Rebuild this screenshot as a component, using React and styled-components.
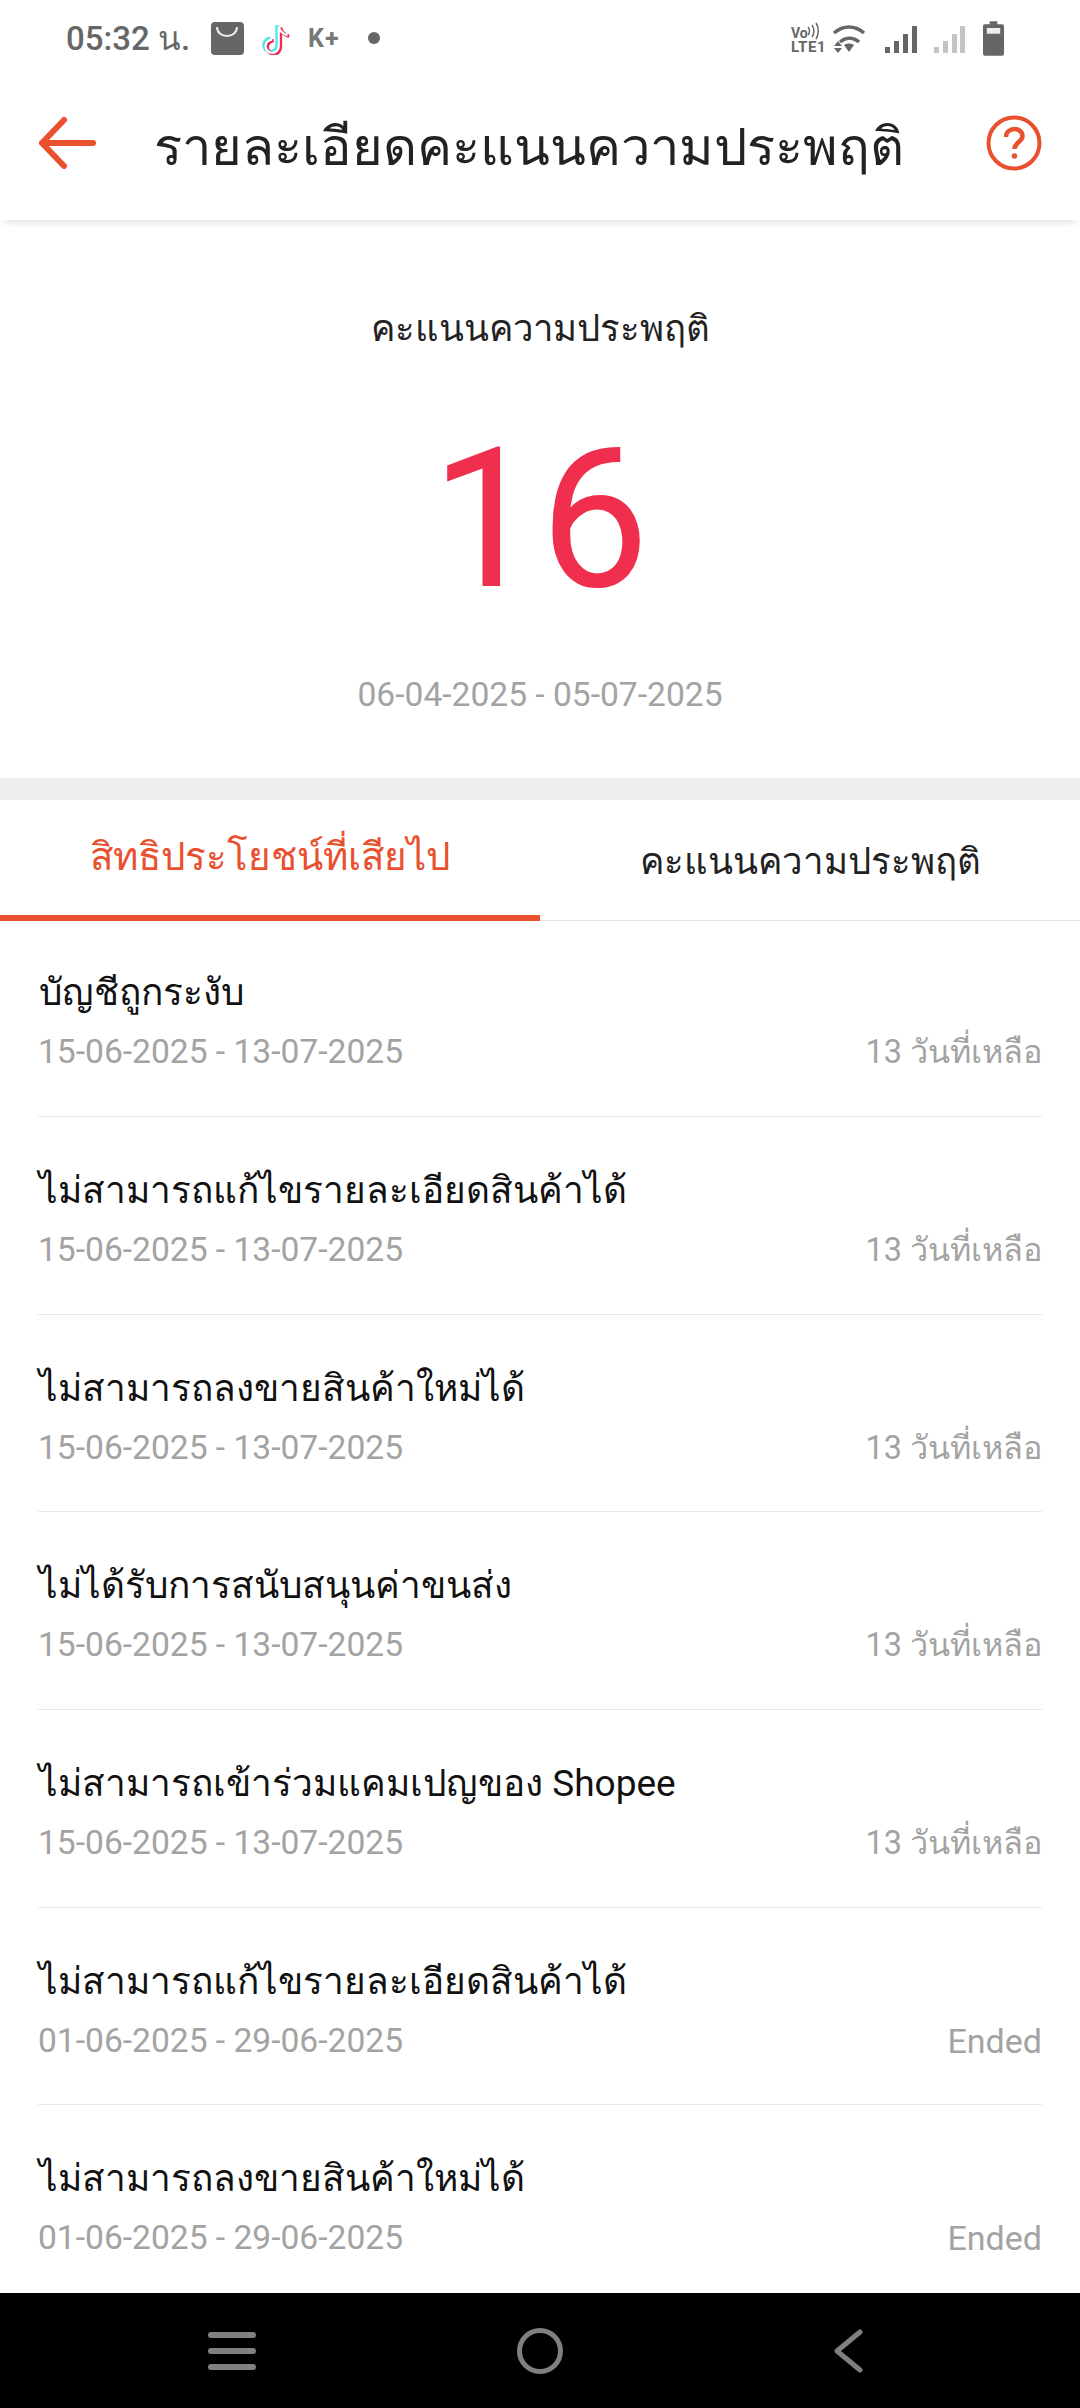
import React from 'react';
import styled, { createGlobalStyle } from 'styled-components';

const GlobalStyle = createGlobalStyle`
  html, body {
    margin: 0;
    padding: 0;
    background: #fff;
    font-family: Roboto, "Noto Sans", "Noto Sans CJK SC", sans-serif;
  }
  * { box-sizing: border-box; }
`;

const ORANGE = '#e8502e';

const Page = styled.div`
  width: 1080px;
  height: 2408px;
  display: flex;
  flex-direction: column;
  overflow: hidden;
  background: #fff;
`;

const StatusBar = styled.div`
  height: 72px;
  flex: none;
  display: flex;
  align-items: center;
  justify-content: space-between;
  padding: 4px 76px 0 66px;
  color: #666;
`;

const StatusGroup = styled.div`
  display: flex;
  align-items: center;
`;

const Clock = styled.span`
  font-size: 33px;
  margin-right: 21px;
  font-weight: 500;
  white-space: nowrap;
`;

const TiktokSvg = styled.svg`
  margin-left: 17px;
`;

const KPlus = styled.span`
  font-size: 25px;
  font-weight: 700;
  letter-spacing: 1px;
  color: #777;
  margin: 0 28px 0 17px;
`;

const Dot = styled.span`
  width: 12px;
  height: 12px;
  border-radius: 50%;
  background: #666;
`;

const BatterySvg = styled.svg`
  margin-left: 18px;
`;

const AppBar = styled.header`
  height: 148px;
  flex: none;
  display: flex;
  align-items: center;
  padding: 0 38px 0 37px;
  position: relative;
  background: #fff;
  box-shadow: 0 7px 7px -5px rgba(0, 0, 0, 0.14);
`;

const BarIcon = styled.svg`
  flex: none;
  margin-bottom: 6px;
`;

const AppTitle = styled.h1`
  flex: 1;
  margin: 0 0 0 57px;
  font-size: 52.5px;
  font-weight: 400;
  color: #222;
  white-space: nowrap;
`;

const Summary = styled.section`
  height: 558px;
  flex: none;
  display: flex;
  flex-direction: column;
  align-items: center;
  padding-top: 84px;
`;

const SummaryLabel = styled.div`
  font-size: 36.5px;
  line-height: 50px;
  color: #222;
`;

const Score = styled.div`
  font-size: 194px;
  line-height: 220px;
  margin-top: 56px;
  color: #ef2f4d;
`;

const SummaryDates = styled.div`
  margin-top: 45px;
  font-size: 33.6px;
  line-height: 40px;
  color: #a3a3a3;
`;

const Band = styled.div`
  height: 22px;
  flex: none;
  background: #efefef;
`;

const Tabs = styled.nav`
  height: 121px;
  flex: none;
  display: flex;
  border-bottom: 1px solid #e5e5e5;
`;

const Tab = styled.div`
  flex: 1;
  display: flex;
  align-items: center;
  justify-content: center;
  margin-bottom: -1px;
  padding-bottom: ${(p) => (p.$active ? '2px' : '0')};
  font-size: ${(p) => (p.$active ? '38.5px' : '36.6px')};
  color: ${(p) => (p.$active ? ORANGE : '#222')};
  border-bottom: ${(p) => (p.$active ? `6px solid ${ORANGE}` : '0')};
`;

const List = styled.div`
  flex: 1;
  min-height: 0;
  overflow: hidden;
  padding: 0 38px;
`;

const Row = styled.div`
  height: 197.7px;
  padding-top: 49px;
  border-bottom: 1px solid #e8e8e8;
  &:first-child {
    height: 196px;
    padding-top: 47px;
  }
`;

const RowTitle = styled.div`
  font-size: 37px;
  line-height: 50px;
  color: #111;
  margin-left: 1px;
`;

const RowMeta = styled.div`
  display: flex;
  justify-content: space-between;
  margin-top: 12px;
  font-size: 33.6px;
  line-height: 44px;
  color: #a3a3a3;
`;

const RowLeft = styled.span`
  font-size: ${(p) => (p.$ended ? '34px' : '32.4px')};
`;

const BottomNav = styled.div`
  height: 115px;
  flex: none;
  background: #000;
  display: grid;
  grid-template-columns: repeat(3, 1fr);
  align-items: center;
  justify-items: center;
  padding: 0 78px;
`;

const rows = [
  ['บัญชีถูกระงับ', '15-06-2025 - 13-07-2025', '13 วันที่เหลือ'],
  ['ไม่สามารถแก้ไขรายละเอียดสินค้าได้', '15-06-2025 - 13-07-2025', '13 วันที่เหลือ'],
  ['ไม่สามารถลงขายสินค้าใหม่ได้', '15-06-2025 - 13-07-2025', '13 วันที่เหลือ'],
  ['ไม่ได้รับการสนับสนุนค่าขนส่ง', '15-06-2025 - 13-07-2025', '13 วันที่เหลือ'],
  ['ไม่สามารถเข้าร่วมแคมเปญของ Shopee', '15-06-2025 - 13-07-2025', '13 วันที่เหลือ'],
  ['ไม่สามารถแก้ไขรายละเอียดสินค้าได้', '01-06-2025 - 29-06-2025', 'Ended'],
  ['ไม่สามารถลงขายสินค้าใหม่ได้', '01-06-2025 - 29-06-2025', 'Ended'],
];

function ShopIcon() {
  return (
    <svg width="33" height="33" viewBox="0 0 33 33">
      <rect width="33" height="33" rx="4" fill="#666" />
      <path d="M6 5c0 12 20 12 20 0" fill="none" stroke="#eee" strokeWidth="2" />
    </svg>
  );
}

function TiktokIcon() {
  const d = 'M17 4v18a6 6 0 1 1-6-6M17 4c1 5 4 7 8 8';
  return (
    <TiktokSvg width="30" height="33" viewBox="2 1 26 30" fill="none" strokeWidth="3.2">
      <path d={d} stroke="#4fe3ea" transform="translate(-1 0)" />
      <path d={d} stroke="#ee2c5a" transform="translate(2 2)" />
      <path d={d} stroke="#fff" strokeWidth="2" transform="translate(.5 1)" />
    </TiktokSvg>
  );
}

function NetworkIcons() {
  return (
    <svg width="175" height="35" viewBox="0 0 175 35">
      <text x="1" y="17" fontFamily="Roboto" fontWeight="700" fontSize="14" fill="#666">Vo</text>
      <text x="1" y="31" fontFamily="Roboto" fontWeight="700" fontSize="15" letterSpacing="0.6" fill="#666">LTE1</text>
      <path d="M21 8c2 2 2 6 0 8M25 6c2.5 3 2.5 9 0 12M29 4c3 4 3 12 0 16" transform="translate(-3 -2)" fill="none" stroke="#666" strokeWidth="1.5" />
      <path d="M44 12c9-8 21-8 30 0M50 21c6-5 13-5 19 0" fill="none" stroke="#666" strokeWidth="3.4" />
      <path d="M44 25l4-5 4 5zM44 27h8l-4 5zM54 24c3-2 7-2 10 0l-5 7z" fill="#666" />
      <path d="M95 26h5v6h-5zM104 20h5v12h-5zM113 13h5v19h-5zM122 5h5v27h-5z" fill="#666" />
      <path d="M144 26h5v6h-5zM153 20h5v12h-5zM162 13h5v19h-5zM170 5h5v27h-5z" fill="#c4c4c4" />
    </svg>
  );
}

function BatteryIcon() {
  return (
    <BatterySvg width="21" height="35" viewBox="0 0 22 36">
      <path d="M7 0h8v3h5a2 2 0 0 1 2 2v29a2 2 0 0 1-2 2H2a2 2 0 0 1-2-2V5a2 2 0 0 1 2-2h5z" fill="#666" />
      <rect x="4" y="7" width="14" height="6" fill="#eee" />
    </BatterySvg>
  );
}

function BackArrow() {
  return (
    <BarIcon width="60" height="54" viewBox="0 0 60 54" fill="none" stroke={ORANGE} strokeWidth="6" strokeLinecap="round" strokeLinejoin="round">
      <path d="M56 27H5M27 4L5 27l22 23" />
    </BarIcon>
  );
}

function HelpIcon() {
  return (
    <BarIcon width="56" height="56" viewBox="0 0 56 56" fill="none" stroke={ORANGE}>
      <circle cx="28" cy="28" r="25.5" strokeWidth="4" />
      <path d="M20 22c0-5 4-8 8.5-8s8 3 8 7c0 6-8 6-8 13" strokeWidth="4.5" />
      <circle cx="28.5" cy="41" r="2.8" fill={ORANGE} stroke="none" />
    </BarIcon>
  );
}

export default function App() {
  return (
    <Page>
      <GlobalStyle />
      <StatusBar>
        <StatusGroup>
          <Clock>05:32 น.</Clock>
          <ShopIcon />
          <TiktokIcon />
          <KPlus>K+</KPlus>
          <Dot />
        </StatusGroup>
        <StatusGroup>
          <NetworkIcons />
          <BatteryIcon />
        </StatusGroup>
      </StatusBar>
      <AppBar>
        <BackArrow />
        <AppTitle>รายละเอียดคะแนนความประพฤติ</AppTitle>
        <HelpIcon />
      </AppBar>
      <Summary>
        <SummaryLabel>คะแนนความประพฤติ</SummaryLabel>
        <Score>16</Score>
        <SummaryDates>06-04-2025 - 05-07-2025</SummaryDates>
      </Summary>
      <Band />
      <Tabs>
        <Tab $active>สิทธิประโยชน์ที่เสียไป</Tab>
        <Tab>คะแนนความประพฤติ</Tab>
      </Tabs>
      <List>
        {rows.map(([title, dates, left], i) => (
          <Row key={i}>
            <RowTitle>{title}</RowTitle>
            <RowMeta>
              <span>{dates}</span>
              <RowLeft $ended={left === 'Ended'}>{left}</RowLeft>
            </RowMeta>
          </Row>
        ))}
      </List>
      <BottomNav>
        <svg width="48" height="38" viewBox="0 0 48 38" fill="#808080">
          <rect width="48" height="6" y="0" rx="3" />
          <rect width="48" height="6" y="16" rx="3" />
          <rect width="48" height="6" y="32" rx="3" />
        </svg>
        <svg width="46" height="46" viewBox="0 0 46 46" fill="none" stroke="#808080" strokeWidth="5">
          <circle cx="23" cy="23" r="20.5" />
        </svg>
        <svg width="30" height="44" viewBox="0 0 30 44" fill="none" stroke="#808080" strokeWidth="5" strokeLinecap="round" strokeLinejoin="round">
          <path d="M27 3L4 22l23 19" />
        </svg>
      </BottomNav>
    </Page>
  );
}
